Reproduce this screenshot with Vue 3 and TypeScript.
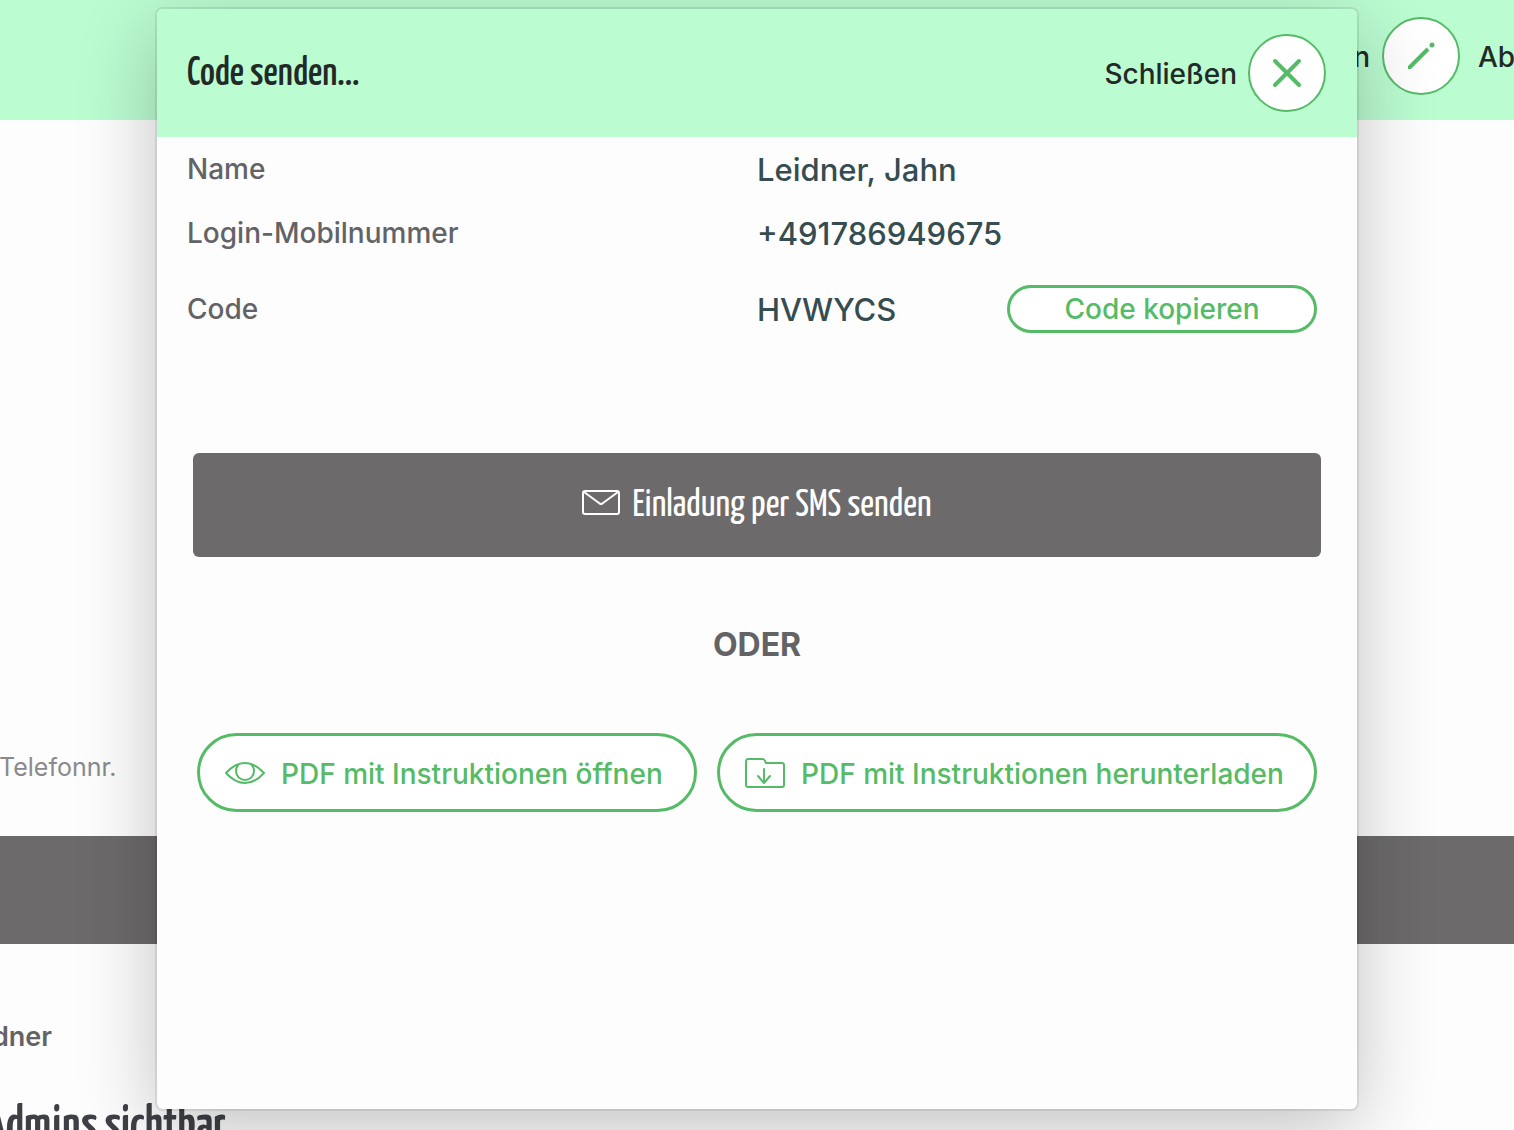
<script setup lang="ts">
interface Entry {
  id: string
  label: string
  value: string
  copyable?: boolean
}

const entries: Entry[] = [
  { id: 'name', label: 'Name', value: 'Leidner, Jahn' },
  { id: 'phone', label: 'Login-Mobilnummer', value: '+491786949675' },
  { id: 'code', label: 'Code', value: 'HVWYCS', copyable: true },
]

function copyCode(value: string): void {
  navigator.clipboard?.writeText(value)
}
</script>

<template>
  <div class="app">
    <div class="page">
      <header class="page-bar">
        <span>n</span>
        <button class="round" type="button" aria-label="Bearbeiten">
          <svg width="30" height="30" viewBox="0 0 30 30" aria-hidden="true">
            <path d="M4 26 L22 8" fill="none" stroke="currentColor" stroke-width="4" />
            <path d="M2 28 V25 L4 24 L6 26 L5 28 Z" fill="currentColor" />
            <circle cx="26" cy="4" r="2.5" fill="currentColor" />
          </svg>
        </button>
        <span class="page-action">Ab</span>
      </header>
      <section class="page-upper"><p class="hint">Telefonnr.</p></section>
      <div class="page-band"></div>
      <section class="page-lower">
        <p class="person">dner</p>
        <h2 class="page-heading">Admins sichtbar</h2>
      </section>
    </div>

    <div class="overlay">
      <section class="modal" role="dialog" aria-labelledby="modal-title">
        <header class="modal-head">
          <h1 id="modal-title">Code senden...</h1>
          <div class="close">
            <label for="close-button">Schließen</label>
            <button id="close-button" class="round" type="button">
              <svg width="30" height="30" viewBox="0 0 30 30" aria-hidden="true">
                <path d="M3 3 L27 27 M27 3 L3 27" fill="none" stroke="currentColor" stroke-width="4" stroke-linecap="round" />
              </svg>
            </button>
          </div>
        </header>

        <dl class="entries">
          <div v-for="entry in entries" :key="entry.id" class="entry" :class="{ roomy: entry.copyable }">
            <dt>{{ entry.label }}</dt>
            <dd>
              <span class="value">{{ entry.value }}</span>
              <button v-if="entry.copyable" class="pill copy" type="button" @click="copyCode(entry.value)">Code kopieren</button>
            </dd>
          </div>
        </dl>

        <button class="sms" type="button">
          <svg width="38" height="30" viewBox="0 0 38 30" fill="none" stroke="currentColor" stroke-width="2" stroke-linejoin="round" aria-hidden="true">
            <rect x="1" y="1" width="36" height="23" rx="2" />
            <path d="M2 2 L17 13 Q19 15 21 13 L36 2" />
          </svg>
          <span>Einladung per SMS senden</span>
        </button>

        <p class="or">ODER</p>

        <div class="pdf-actions">
          <button class="pill" type="button">
            <svg width="40" height="30" viewBox="0 0 40 30" fill="none" stroke="currentColor" stroke-width="2" stroke-linejoin="round" aria-hidden="true">
              <path d="M1 15 Q10 5 20 5 Q30 5 39 15 Q30 25 20 25 Q10 25 1 15 Z" />
              <path d="M14 6 Q11 9 11 13 A9 9 0 0 0 29 13 Q29 9 26 6" />
            </svg>
            <span>PDF mit Instruktionen öffnen</span>
          </button>
          <button class="pill" type="button">
            <svg width="40" height="30" viewBox="0 0 40 30" fill="none" stroke="currentColor" stroke-width="2" stroke-linejoin="round" stroke-linecap="round" aria-hidden="true">
              <path d="M3 1 H18 Q19 1 20 3 L21 5 H37 Q39 5 39 7 V27 Q39 29 37 29 H3 Q1 29 1 27 V4 Q1 1 3 1 Z" />
              <path d="M19 11 V25 M13 18 L19 25 L25 18" />
            </svg>
            <span>PDF mit Instruktionen herunterladen</span>
          </button>
        </div>
      </section>
    </div>
  </div>
</template>

<style>
body {
  margin: 0;
  background: #fdfdfd;
}
</style>

<style scoped>
.app {
  position: relative;
  height: 100vh;
  overflow: hidden;
  font-family: Inter, "Liberation Sans", sans-serif;
  font-size: 28px;
  font-weight: 500;
  line-height: 36px;
  color: #636366;
}
h1, h2, p, dl, dd {
  margin: 0;
}
h1, h2, .sms {
  font-family: "Yanone Kaffeesatz", "Liberation Sans Narrow", sans-serif;
}
button {
  font: inherit;
  padding: 0;
  color: #55bb66;
  background: #fff;
  cursor: pointer;
}
svg {
  display: block;
  flex: none;
}

.page-bar {
  display: flex;
  justify-content: flex-end;
  align-items: center;
  gap: 12px;
  box-sizing: border-box;
  height: 120px;
  padding-bottom: 8px;
  background: #bbfcd1;
  color: #232926;
}
.page-action {
  width: 36px;
  margin-left: 6px;
  overflow: hidden;
}
.page-bar span,
.close label,
.pill span,
.sms span,
.value {
  padding-top: 2px;
}
.round {
  display: flex;
  align-items: center;
  justify-content: center;
  flex: none;
  width: 78px;
  height: 78px;
  box-sizing: border-box;
  border: 2px solid #55bb66;
  border-radius: 50%;
}
.page-upper {
  display: flex;
  align-items: flex-end;
  box-sizing: border-box;
  height: 716px;
  padding-bottom: 51px;
}
.hint {
  margin-left: -1px;
  font-size: 25px;
  font-weight: 400;
  color: #8a8a8e;
}
.page-band {
  height: 108px;
  background: #6c6a6b;
}
.page-lower {
  padding-top: 75px;
}
.person {
  margin-left: -8px;
  font-size: 27px;
  font-weight: 600;
}
.page-heading {
  margin: 44px 0 0 -16px;
  font-size: 50px;
  font-weight: 600;
  line-height: 56px;
  white-space: nowrap;
  color: #3f4046;
}

.overlay {
  position: absolute;
  inset: 0;
  display: flex;
  justify-content: center;
  padding: 9px 0 21px;
}
.modal {
  width: 100%;
  max-width: 1200px;
  border-radius: 6px;
  background: #fdfdfd;
  box-shadow: 0 0 0 2px rgba(0, 0, 0, 0.08), 0 20px 80px rgba(0, 0, 0, 0.24);
}
.modal-head {
  display: flex;
  align-items: center;
  justify-content: space-between;
  height: 128px;
  padding: 0 31px 0 30px;
  border-radius: 6px 6px 0 0;
  background: #bbfcd1;
  color: #232926;
}
h1 {
  padding-top: 4px;
  font-size: 40px;
  font-weight: 500;
  line-height: 40px;
}
.close {
  display: flex;
  align-items: center;
  gap: 11px;
}
.entry {
  display: grid;
  grid-template-columns: 1fr 1fr;
  align-items: center;
  height: 64px;
}
.entry.roomy {
  height: 88px;
}
dt {
  padding-left: 30px;
  font-weight: 450;
}
dd {
  display: flex;
  align-items: center;
  justify-content: space-between;
  padding-right: 40px;
  font-size: 31px;
  color: #354d50;
}
.pill {
  display: flex;
  align-items: center;
  gap: 16px;
  box-sizing: border-box;
  height: 79px;
  padding: 0 25px;
  border: 3px solid #55bb66;
  border-radius: 40px;
  white-space: nowrap;
}
.copy {
  justify-content: center;
  width: 310px;
  height: 48px;
  font-size: 28px;
}
.sms {
  display: flex;
  align-items: center;
  justify-content: center;
  gap: 12px;
  width: calc(100% - 72px);
  height: 104px;
  margin: 100px 36px 0;
  border: 0;
  border-radius: 6px;
  background: #6c6a6b;
  color: #fff;
  font-size: 38px;
  font-weight: 400;
}
.or {
  margin-top: 70px;
  font-size: 32px;
  font-weight: 700;
  text-align: center;
}
.pdf-actions {
  display: grid;
  grid-template-columns: 5fr 6fr;
  gap: 20px;
  margin: 70px 40px 0;
}
</style>
